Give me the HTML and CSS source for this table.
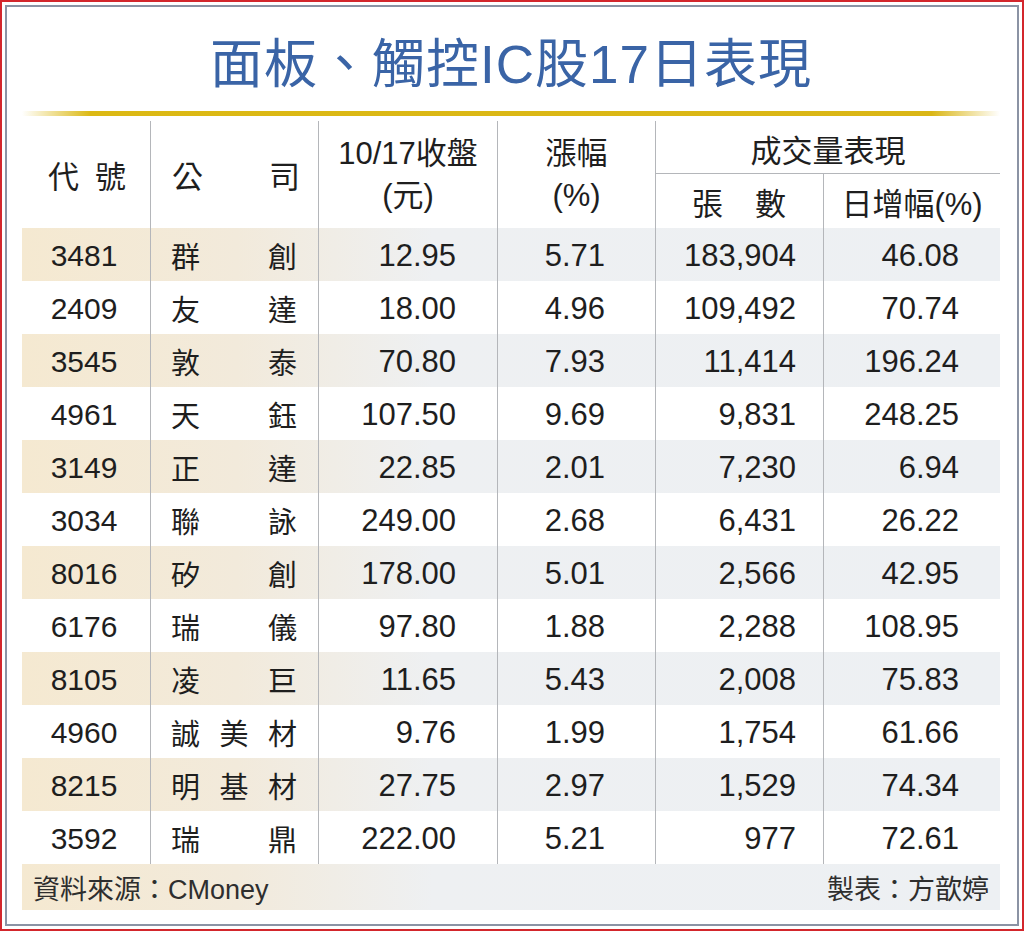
FILE: index.html
```html
<!DOCTYPE html>
<html lang="zh-Hant">
<head>
<meta charset="utf-8">
<title>面板、觸控IC股17日表現</title>
<link rel="stylesheet" href="styles.css">
</head>
<body>
<div class="frame">
  <div class="inner">
    <h1 class="title">面板、觸控IC股17日表現</h1>
    <div class="rule"></div>
    <div class="head">
      <div class="h-code h-span"><span>代</span><span>號</span></div>
      <div class="h-name h-span div"><span>公</span><span>司</span></div>
      <div class="h-price h-span div stack"><span>10/17收盤</span><span>(元)</span></div>
      <div class="h-chg h-span div stack"><span>漲幅</span><span>(%)</span></div>
      <div class="h-vol div">成交量表現</div>
      <div class="h-lots div sub"><span>張</span><span>數</span></div>
      <div class="h-inc div sub sub2">日增幅(%)</div>
    </div>
    <div class="rows">
      <div class="row odd"><div class="c code">3481</div><div class="c name div"><span>群</span><span>創</span></div><div class="c num price div">12.95</div><div class="c num chg div">5.71</div><div class="c num lots div">183,904</div><div class="c num inc div">46.08</div></div>
      <div class="row"><div class="c code">2409</div><div class="c name div"><span>友</span><span>達</span></div><div class="c num price div">18.00</div><div class="c num chg div">4.96</div><div class="c num lots div">109,492</div><div class="c num inc div">70.74</div></div>
      <div class="row odd"><div class="c code">3545</div><div class="c name div"><span>敦</span><span>泰</span></div><div class="c num price div">70.80</div><div class="c num chg div">7.93</div><div class="c num lots div">11,414</div><div class="c num inc div">196.24</div></div>
      <div class="row"><div class="c code">4961</div><div class="c name div"><span>天</span><span>鈺</span></div><div class="c num price div">107.50</div><div class="c num chg div">9.69</div><div class="c num lots div">9,831</div><div class="c num inc div">248.25</div></div>
      <div class="row odd"><div class="c code">3149</div><div class="c name div"><span>正</span><span>達</span></div><div class="c num price div">22.85</div><div class="c num chg div">2.01</div><div class="c num lots div">7,230</div><div class="c num inc div">6.94</div></div>
      <div class="row"><div class="c code">3034</div><div class="c name div"><span>聯</span><span>詠</span></div><div class="c num price div">249.00</div><div class="c num chg div">2.68</div><div class="c num lots div">6,431</div><div class="c num inc div">26.22</div></div>
      <div class="row odd"><div class="c code">8016</div><div class="c name div"><span>矽</span><span>創</span></div><div class="c num price div">178.00</div><div class="c num chg div">5.01</div><div class="c num lots div">2,566</div><div class="c num inc div">42.95</div></div>
      <div class="row"><div class="c code">6176</div><div class="c name div"><span>瑞</span><span>儀</span></div><div class="c num price div">97.80</div><div class="c num chg div">1.88</div><div class="c num lots div">2,288</div><div class="c num inc div">108.95</div></div>
      <div class="row odd"><div class="c code">8105</div><div class="c name div"><span>凌</span><span>巨</span></div><div class="c num price div">11.65</div><div class="c num chg div">5.43</div><div class="c num lots div">2,008</div><div class="c num inc div">75.83</div></div>
      <div class="row"><div class="c code">4960</div><div class="c name div"><span>誠</span><span>美</span><span>材</span></div><div class="c num price div">9.76</div><div class="c num chg div">1.99</div><div class="c num lots div">1,754</div><div class="c num inc div">61.66</div></div>
      <div class="row odd"><div class="c code">8215</div><div class="c name div"><span>明</span><span>基</span><span>材</span></div><div class="c num price div">27.75</div><div class="c num chg div">2.97</div><div class="c num lots div">1,529</div><div class="c num inc div">74.34</div></div>
      <div class="row"><div class="c code">3592</div><div class="c name div"><span>瑞</span><span>鼎</span></div><div class="c num price div">222.00</div><div class="c num chg div">5.21</div><div class="c num lots div">977</div><div class="c num inc div">72.61</div></div>
    </div>
    <div class="foot">
      <span>資料來源：CMoney</span>
      <span>製表：方歆婷</span>
    </div>
  </div>
</div>
</body>
</html>
```

FILE: styles.css
```css
* { box-sizing: border-box; }
html, body { margin: 0; padding: 0; background: #fff; }
body {
  font-family: "Liberation Sans", "Noto Sans CJK TC", sans-serif;
  color: #1e1e1e;
}
.frame {
  width: 1024px;
  height: 931px;
  border: 2px solid #d3262c;
  padding: 3px;
  background: #fff;
}
.inner {
  height: 100%;
  border: 2px solid #8b93a4;
  padding: 0 17px 0 15px;
  display: flex;
  flex-direction: column;
}
.title {
  margin: 0;
  height: 104px;
  display: flex;
  align-items: center;
  justify-content: center;
  padding-top: 10px;
  font-size: 53px;
  font-weight: 400;
  letter-spacing: 1px;
  color: #3a64a6;
  line-height: 1;
}
.rule {
  height: 5px;
  background: linear-gradient(to right, rgba(220,184,20,0) 0%, #dcb914 7%, #dab616 93%, rgba(220,184,20,0) 100%);
}
.head {
  margin-top: 5px;
  display: grid;
  grid-template-columns: 128px 168px 179px 158px 168px 177px;
  grid-template-rows: 53px 54px;
  font-size: 31px;
}
.div { border-left: 1px solid #b4b6ba; }
.h-span { grid-row: 1 / span 2; display: flex; align-items: center; }
.h-code { grid-column: 1; justify-content: space-between; padding: 0 24px 0 26px; }
.h-name { grid-column: 2; justify-content: space-between; padding: 0 18px 0 21px; }
.h-price { grid-column: 3; }
.h-chg { grid-column: 4; }
.stack { flex-direction: column; justify-content: center; gap: 4px; line-height: 38px; }
.h-vol {
  grid-column: 5 / span 2;
  grid-row: 1;
  display: flex;
  align-items: center;
  justify-content: center;
  padding-top: 2px;
  border-bottom: 1px solid #b4b6ba;
}
.sub { grid-row: 2; display: flex; align-items: center; }
.h-lots { grid-column: 5; justify-content: space-between; padding: 0 37px 0 36px; }
.h-inc { grid-column: 6; justify-content: center; }
.rows { display: flex; flex-direction: column; }
.row {
  display: grid;
  grid-template-columns: 128px 168px 179px 158px 168px 177px;
  height: 53px;
  font-size: 29px;
}
.row.odd, .foot {
  background: linear-gradient(to right, #f5e9d1 0%, #f2eadb 22%, #eef0f2 42%, #edf0f3 100%);
}
.c { display: flex; align-items: center; }
.code { justify-content: center; padding-right: 4px; font-size: 30px; padding-top: 3px; }
.name { justify-content: space-between; padding: 0 21px 0 20px; }
.num { justify-content: flex-end; font-size: 31px; padding-top: 3px; }
.price { padding-right: 41px; }
.chg { padding-right: 50px; }
.lots { padding-right: 27px; }
.inc { padding-right: 41px; }
.foot {
  height: 46px;
  display: flex;
  align-items: center;
  justify-content: space-between;
  padding: 0 11px;
  font-size: 27px;
  color: #2e2e2e;
}
```
